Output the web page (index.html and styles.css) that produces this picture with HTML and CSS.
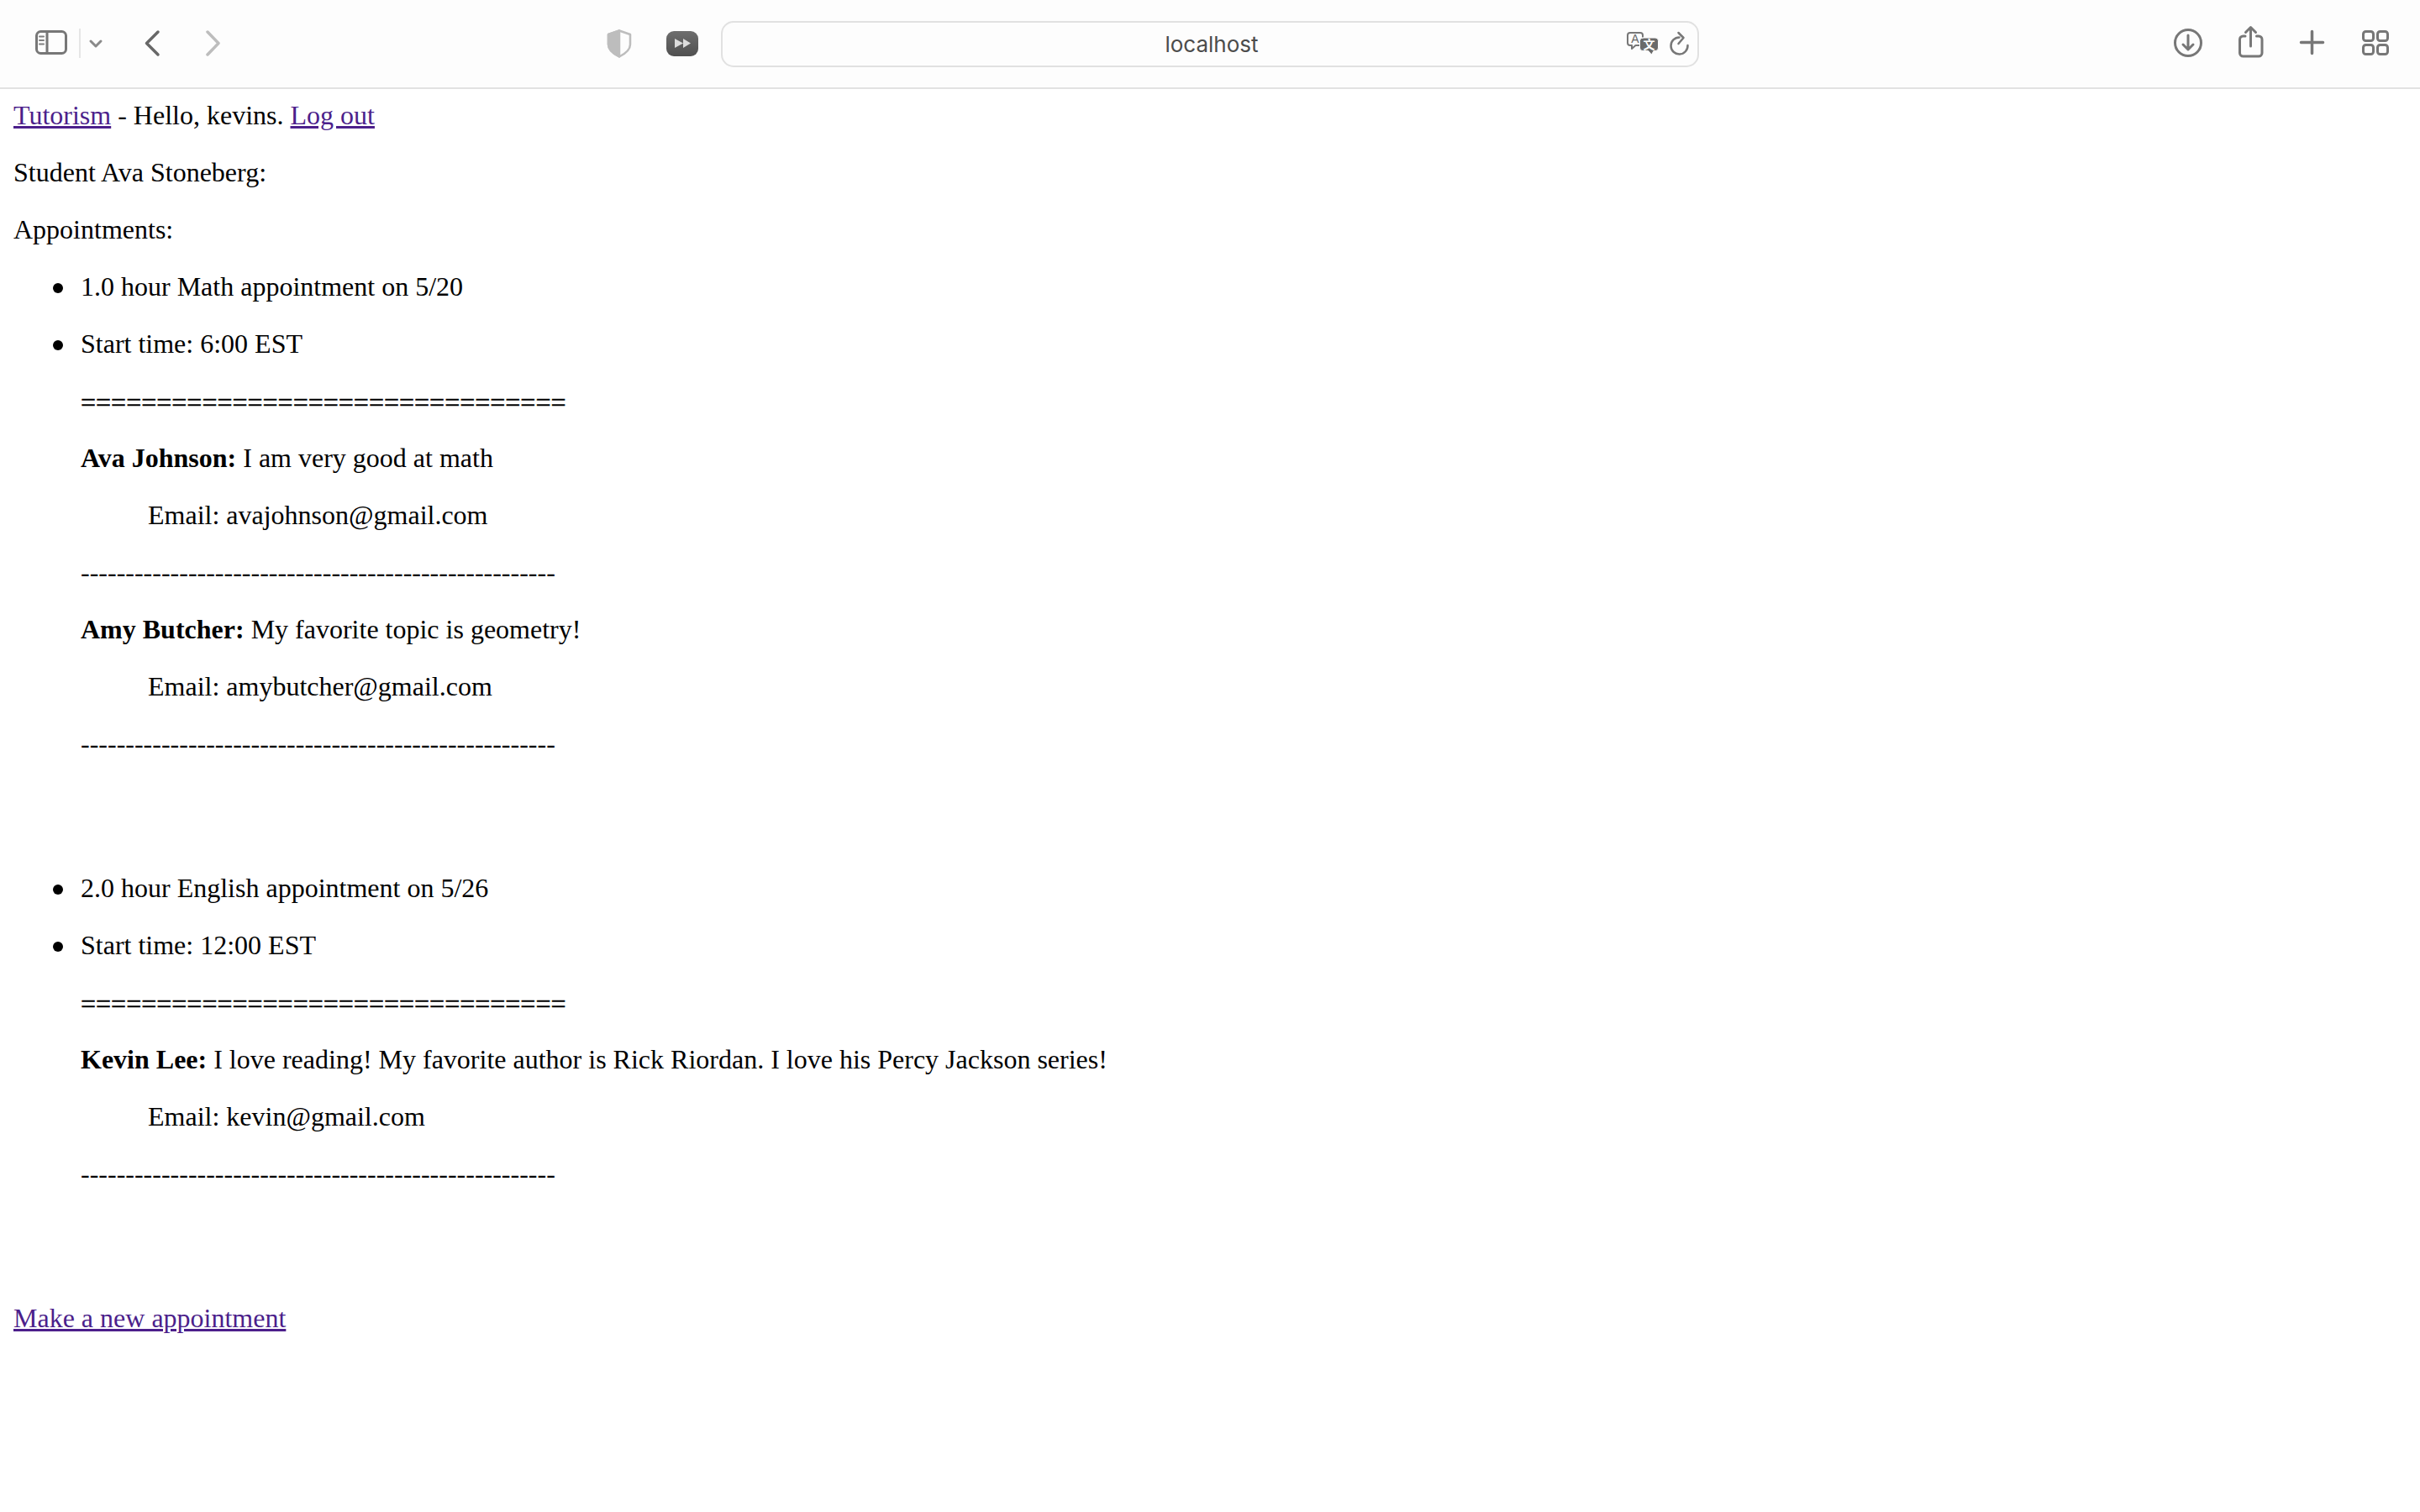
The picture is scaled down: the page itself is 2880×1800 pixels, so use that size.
FILE: index.html
```html
<!DOCTYPE html>
<html lang="en">
<head>
<meta charset="utf-8">
<title>localhost</title>
<link rel="stylesheet" href="styles.css">
</head>
<body>
<header class="toolbar">
  <div class="group group-left">
    <svg class="icon w42" viewBox="0 0 42 44"><rect x="3.5" y="7.5" width="35" height="26" rx="5" class="s3"/><path d="M16 7.5V33.5" class="s3"/><path d="M7 13.5H12M7 18H12M7 22.5H12" class="s2"/></svg>
    <svg class="icon w36 after-side" viewBox="0 0 36 44"><path d="M5 4V39" class="sep"/><path d="M18 19L24 25L30 19" class="chev"/></svg>
    <svg class="icon w24 after-chev" viewBox="0 0 24 44"><path d="M18 8L4.5 21.5L18 35" class="nav"/></svg>
    <svg class="icon w24 after-back" viewBox="0 0 24 44"><path d="M5 8L18 21.5L5 35" class="nav off"/></svg>
  </div>
  <div class="group group-mid">
    <svg class="icon w34" viewBox="0 0 34 44"><path d="M17 6.5L30 11V23C30 29 24 34 17 37.5C10 34 4 29 4 23V11Z" class="shield"/><path d="M17 6.5L4 11V23C4 29 10 34 17 37.5Z" class="shield-fill"/></svg>
    <svg class="icon w44 after-shield" viewBox="0 0 44 44"><defs><linearGradient id="pg" x1="0" y1="0" x2="0" y2="1"><stop offset="0" stop-color="#6e6e6e"/><stop offset="1" stop-color="#505050"/></linearGradient></defs><rect x="3" y="7" width="38" height="30" rx="9" fill="url(#pg)"/><path d="M13 16L23 21.5L13 27ZM23 16L32 21.5L23 27Z" fill="#dcdcdc"/></svg>
    <div class="address">
      <span></span>
      <span class="host">localhost</span>
      <div class="address-tools">
        <svg class="icon w40" viewBox="0 0 40 44"><path d="M6 9H18a3 3 0 0 1 3 3V21a3 3 0 0 1-3 3H12.500L8 28V24H6a3 3 0 0 1-3-3V12a3 3 0 0 1 3-3Z" class="bubble"/><text x="12" y="21" class="glyph-a">A</text><path d="M21 15H36a3.500 3.500 0 0 1 3.500 3.500V27a3.500 3.500 0 0 1-3.500 3.500H34L31.500 35L27.500 30.500H21a3.500 3.500 0 0 1-3.500-3.500V18.500a3.500 3.500 0 0 1 3.500-3.500Z" class="bubble-dark"/><text x="28.500" y="28" class="glyph-x">文</text></svg>
        <svg class="icon w24" viewBox="0 0 24 44"><path d="M12.500 14.500A10 10 0 1 0 22.500 24" class="reload"/><path d="M11.500 9L17.500 15L11.500 22" class="reload"/></svg>
      </div>
    </div>
  </div>
  <div class="group group-right">
    <svg class="icon w40" viewBox="0 0 40 44"><circle cx="20" cy="21" r="15.500" class="s3"/><path d="M20 12V29M14 23L20 29L26 23" class="s25"/></svg>
    <svg class="icon w36 gap36" viewBox="0 0 36 44"><path d="M12 13H9.500a4 4 0 0 0-4 4V33a4 4 0 0 0 4 4H28a4 4 0 0 0 4-4V17a4 4 0 0 0-4-4H25.500" class="s3"/><path d="M18.500 25V3M12.500 8.500L18.500 2.500L24.500 8.500" class="s25"/></svg>
    <svg class="icon w40 gap36" viewBox="0 0 40 44"><path d="M6.500 20.500H32.500M19.500 7.500V33.500" class="s35"/></svg>
    <svg class="icon w40 gap34" viewBox="0 0 40 44"><rect x="6.500" y="7.500" width="12" height="11" rx="3" class="s3"/><rect x="23.500" y="7.500" width="12" height="11" rx="3" class="s3"/><rect x="6.500" y="23.500" width="12" height="11" rx="3" class="s3"/><rect x="23.500" y="23.500" width="12" height="11" rx="3" class="s3"/></svg>
  </div>
</header>
<main class="page">
  <p class="first"><a href="#">Tutorism</a> - Hello, kevins. <a href="#">Log out</a></p>
  <p>Student Ava Stoneberg:</p>
  <p>Appointments:</p>
  <ul>
    <li><p>1.0 hour Math appointment on 5/20</p></li>
    <li>
      <p>Start time: 6:00 EST</p>
      <p class="rule">================================</p>
      <p><b>Ava Johnson:</b> I am very good at math</p>
      <p class="email">Email: avajohnson@gmail.com</p>
      <p>-----------------------------------------------------</p>
      <p><b>Amy Butcher:</b> My favorite topic is geometry!</p>
      <p class="email">Email: amybutcher@gmail.com</p>
      <p>-----------------------------------------------------</p>
    </li>
  </ul>
  <ul>
    <li><p>2.0 hour English appointment on 5/26</p></li>
    <li>
      <p>Start time: 12:00 EST</p>
      <p class="rule">================================</p>
      <p><b>Kevin Lee:</b> I love reading! My favorite author is Rick Riordan. I love his Percy Jackson series!</p>
      <p class="email">Email: kevin@gmail.com</p>
      <p>-----------------------------------------------------</p>
    </li>
  </ul>
  <p><a href="#">Make a new appointment</a></p>
</main>
</body>
</html>
```
FILE: styles.css
```css
html, body { margin: 0; background: #fff; }
body { font-family: "Liberation Serif", "Times New Roman", serif; font-size: 32px; line-height: 36px; color: #000; }

.toolbar {
  display: grid;
  grid-template-columns: 720px 1302px 1fr;
  align-items: center;
  height: 104px;
  background: #fdfdfd;
  border-bottom: 2px solid #e2e2e2;
  margin-bottom: -1px;
}
.group { display: flex; align-items: center; }
.group-left { padding-left: 40px; }
.group-right { justify-content: flex-end; padding-right: 34px; }

.icon { display: block; height: 44px; flex: none; fill: none; stroke-linecap: round; stroke-linejoin: round; }
.w24 { width: 24px; }
.w34 { width: 34px; }
.w36 { width: 36px; }
.w40 { width: 40px; }
.w42 { width: 42px; }
.w44 { width: 44px; }
.after-side { margin-left: 8px; }
.after-chev { margin-left: 44px; }
.after-back { margin-left: 48px; }
.after-shield { margin-left: 36px; }
.gap36 { margin-left: 36px; }
.gap34 { margin-left: 34px; }

.s2 { stroke: #808080; stroke-width: 2; }
.s3 { stroke: #777; stroke-width: 3; }
.s25 { stroke: #777; stroke-width: 3; }
.s35 { stroke: #777; stroke-width: 3.5; }
.sep { stroke: #e6e6e6; stroke-width: 2; stroke-linecap: butt; }
.chev { stroke: #8a8a8a; stroke-width: 3; }
.nav { stroke: #686868; stroke-width: 3.5; }
.nav.off { stroke: #bdbdbd; }
.shield { stroke: #bdbdbd; stroke-width: 2.5; }
.shield-fill { fill: #bdbdbd; stroke: #bdbdbd; stroke-width: 2.5; }
.bubble { stroke: #777; stroke-width: 2; fill: #fdfdfd; }
.bubble-dark { fill: #6a6a6a; stroke: #fdfdfd; stroke-width: 1; }
.glyph-a { font-family: "Liberation Sans", sans-serif; font-size: 14px; fill: #666; text-anchor: middle; }
.glyph-x { font-family: "Noto Sans CJK SC", sans-serif; font-size: 14px; font-weight: 700; fill: #fff; text-anchor: middle; }
.reload { stroke: #777; stroke-width: 2.5; }

.address {
  display: grid;
  grid-template-columns: 1fr auto 1fr;
  align-items: center;
  flex: none;
  box-sizing: border-box;
  width: 1164px;
  height: 55px;
  margin-left: 24px;
  padding: 0 10px 0 14px;
  background: #fdfdfd;
  border: 2.5px solid #e1e1e1;
  border-radius: 15px;
}
.host { padding-top: 2px; font-family: Inter, "Liberation Sans", sans-serif; font-size: 26px; line-height: 30px; color: #4c4c4c; }
.address-tools { display: flex; justify-content: flex-end; align-items: center; gap: 12px; }

.page { padding: 14px 16px 16px; }
p { margin: 32px 0; }
.first { margin-top: 0; }
a { color: #4c1f8b; }
ul { margin: 32px 0 136px; padding-left: 80px; list-style: none; }
li { position: relative; }
li::before { content: ""; position: absolute; left: -33px; top: 14px; width: 12px; height: 12px; border-radius: 50%; background: #000; }
.email { margin-left: 80px; }
.rule { height: 34px; padding-top: 2px; -webkit-text-stroke: 0.5px #000; }
```
